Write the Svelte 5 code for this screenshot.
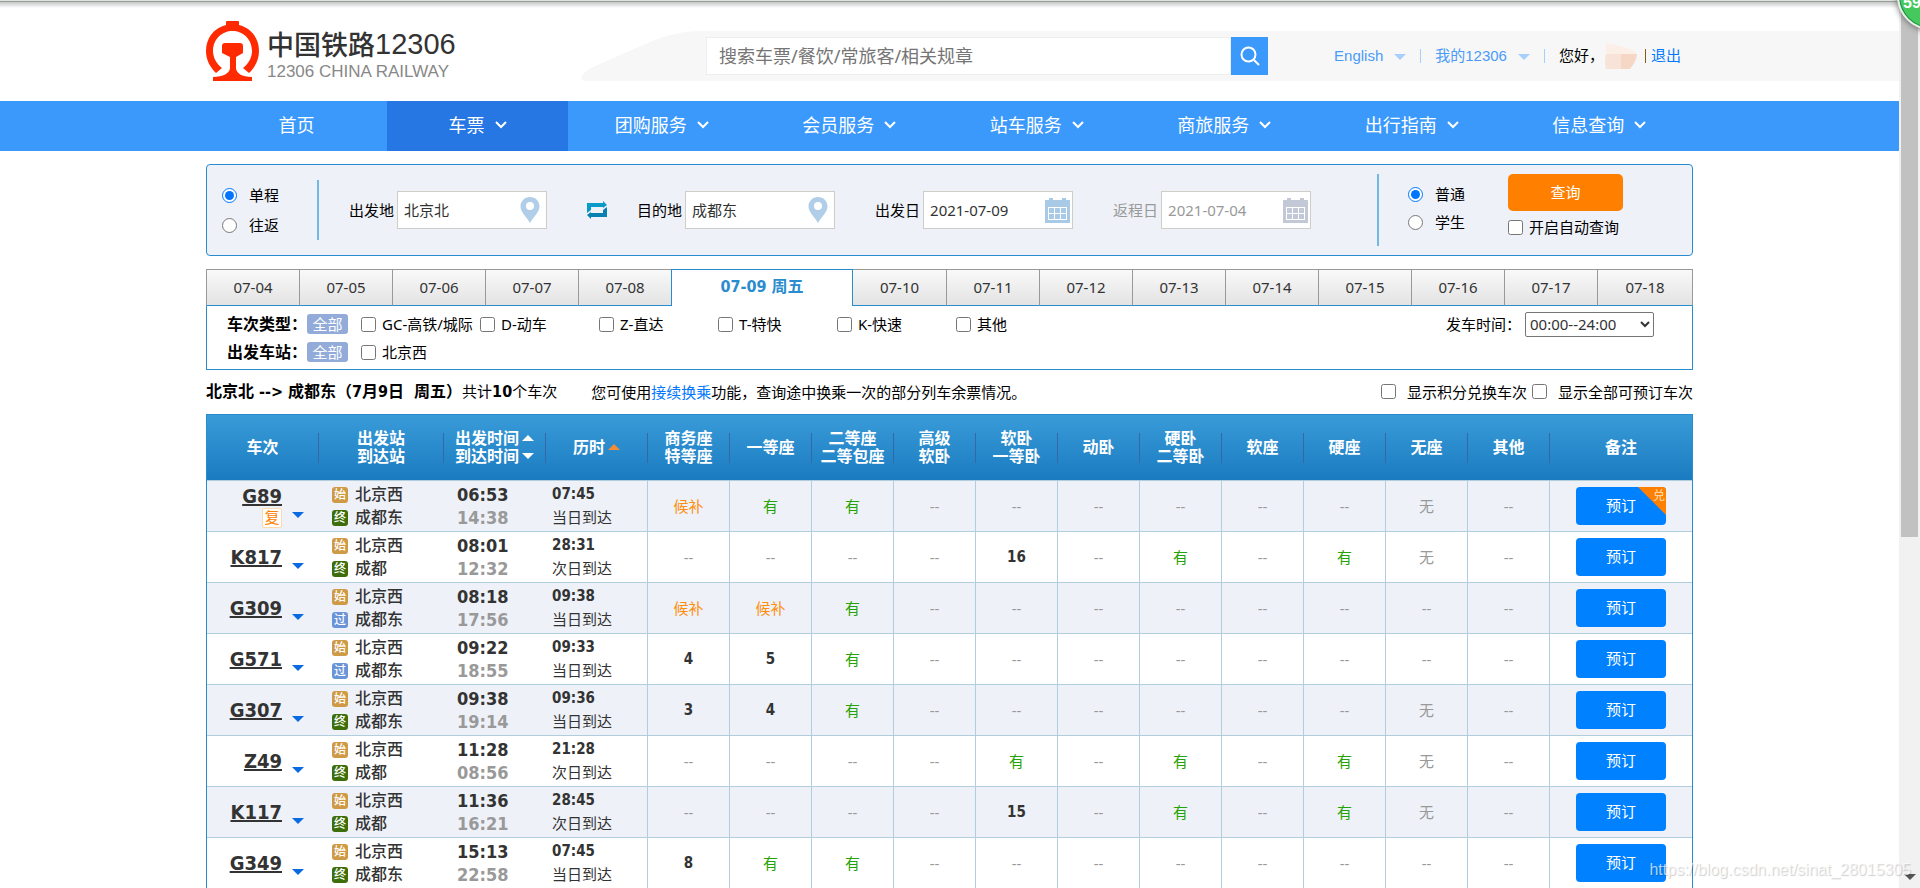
<script lang="ts">
  type Train = {
    code: string;
    fuxing?: boolean;
    to: string;
    end: string;
    dep: string;
    arr: string;
    dur: string;
    day: string;
    seats: string[];
    points?: boolean;
  };

  const nav = ["首页", "车票", "团购服务", "会员服务", "站车服务", "商旅服务", "出行指南", "信息查询"];

  const days = ["07-04", "07-05", "07-06", "07-07", "07-08", "07-09 周五", "07-10", "07-11",
    "07-12", "07-13", "07-14", "07-15", "07-16", "07-17", "07-18"];

  const types = ["GC-高铁/城际", "D-动车", "Z-直达", "T-特快", "K-快速", "其他"];

  const seatHeads = [
    ["商务座", "特等座"], ["一等座"], ["二等座", "二等包座"], ["高级", "软卧"], ["软卧", "一等卧"],
    ["动卧"], ["硬卧", "二等卧"], ["软座"], ["硬座"], ["无座"], ["其他"],
  ];

  const row = (s: string) => s.split(" ");

  const trains: Train[] = [
    { code: "G89", fuxing: true, to: "成都东", end: "终", dep: "06:53", arr: "14:38", dur: "07:45", day: "当日到达", seats: row("候补 有 有 -- -- -- -- -- -- 无 --"), points: true },
    { code: "K817", to: "成都", end: "终", dep: "08:01", arr: "12:32", dur: "28:31", day: "次日到达", seats: row("-- -- -- -- 16 -- 有 -- 有 无 --") },
    { code: "G309", to: "成都东", end: "过", dep: "08:18", arr: "17:56", dur: "09:38", day: "当日到达", seats: row("候补 候补 有 -- -- -- -- -- -- -- --") },
    { code: "G571", to: "成都东", end: "过", dep: "09:22", arr: "18:55", dur: "09:33", day: "当日到达", seats: row("4 5 有 -- -- -- -- -- -- -- --") },
    { code: "G307", to: "成都东", end: "终", dep: "09:38", arr: "19:14", dur: "09:36", day: "当日到达", seats: row("3 4 有 -- -- -- -- -- -- 无 --") },
    { code: "Z49", to: "成都", end: "终", dep: "11:28", arr: "08:56", dur: "21:28", day: "次日到达", seats: row("-- -- -- -- 有 -- 有 -- 有 无 --") },
    { code: "K117", to: "成都", end: "终", dep: "11:36", arr: "16:21", dur: "28:45", day: "次日到达", seats: row("-- -- -- -- 15 -- 有 -- 有 无 --") },
    { code: "G349", to: "成都东", end: "终", dep: "15:13", arr: "22:58", dur: "07:45", day: "当日到达", seats: row("8 有 有 -- -- -- -- -- -- -- --") },
  ];

  const seatClass = (v: string) => {
    if (v === "有") return "yes";
    if (v === "候补") return "wait";
    if (v === "--" || v === "无") return "no";
    return "num";
  };

  let trip = $state("single");
  let kind = $state("normal");
</script>

{#snippet pin()}
  <svg class="field-icon" width="20" height="26" viewBox="0 0 20 26">
    <path d="M10 0C4.500 0 0.500 4.200 0.500 9.500C0.500 15 6 19 10 26C14 19 19.500 15 19.500 9.500C19.500 4.200 15.500 0 10 0Z" fill="#b0cee8" />
    <circle cx="10" cy="9" r="4" fill="#fff" />
  </svg>
{/snippet}

{#snippet calendar(color: string)}
  <svg class="field-icon" width="25" height="25" viewBox="0 0 25 25">
    <path d="M0 2H4V0H8V2H17V0H21V2H25V25H0Z" fill={color} />
    <path d="M3 9H22V22H3Z" fill="#fff" />
    <path d="M4 10h5v5h-5zM10 10h5v5h-5zM16 10h5v5h-5zM4 16h5v5h-5zM10 16h5v5h-5zM16 16h5v5h-5z" fill={color} />
  </svg>
{/snippet}

<div class="screen">
  <div class="page">
    <header>
      <a class="logo" href="#top">
        <svg width="53" height="60" viewBox="0 0 53 60">
          <path d="M20 4V1Q20 0 21 0H32Q33 0 33 1V4C45 7 53 17 53 30C53 39 49 46 43 52L37 47C42 43 46 37 46 30C46 18 37 10 26.500 10C16 10 7 18 7 30C7 37 11 43 16 47L10 52C4 46 0 39 0 30C0 17 8 7 20 4Z" fill="#ff2a00" />
          <path d="M19 22H34Q37 22 37 25V32L30 36V47C30 52 36 56 46 56V60H7V56C17 56 24 52 24 47V36L16 32V25Q16 22 19 22Z" fill="#ff2a00" />
        </svg>
        <span class="brand">
          <strong>中国铁路<span>12306</span></strong>
          <small>12306 CHINA RAILWAY</small>
        </span>
      </a>
      <svg class="curve" width="125" height="50" viewBox="0 0 125 50">
        <path d="M6 50Q0 50 0 47Q2 41 12 36L62 14Q90 1 115 0H125V50Z" fill="#f7f7f7" />
      </svg>
      <div class="band">
        <form class="search">
          <input type="text" aria-label="搜索" placeholder="搜索车票/餐饮/常旅客/相关规章" />
          <button type="button" aria-label="搜索">
            <svg width="20" height="20" viewBox="0 0 20 20" fill="none" stroke="#fff" stroke-width="2">
              <circle cx="8.500" cy="8.500" r="7" />
              <path d="M13.500 13.500L19 19" />
            </svg>
          </button>
        </form>
        <div class="user">
          <a class="soft" href="#en">English</a><i class="tri pale"></i><i class="bar"></i>
          <a class="soft" href="#my">我的12306</a><i class="tri pale"></i><i class="bar"></i>
          <span>您好，</span>
          <svg width="34" height="26" viewBox="0 0 34 26">
            <path d="M2 1Q14 1 25 6Q32 7 33 14Q31 20 26 25H4Q0 18 2 10Z" fill="#fbefe8" />
            <path d="M2 11H17V26H2Q0 20 2 11Z" fill="#f8e3d8" />
            <path d="M17 11H33Q32 19 26 26H17Z" fill="#f6d7c5" />
          </svg>
          <i class="bar dark"></i>
          <a href="#out">退出</a>
        </div>
      </div>
    </header>

    <nav>
      <div class="wrap nav-list">
        {#each nav as item, i}
          <a href="#nav" class:short={i < 2} class:active={i === 1}>
            {item}
            {#if i > 0}
              <svg width="12" height="8" viewBox="0 0 12 8" fill="none" stroke="#fff" stroke-width="2"><path d="M1 1L6 6L11 1" /></svg>
            {/if}
          </a>
        {/each}
      </div>
    </nav>

    <main class="wrap">
      <form class="query">
        <div class="trip">
          <label><input type="radio" name="trip" value="single" bind:group={trip} />单程</label>
          <label><input type="radio" name="trip" value="round" bind:group={trip} />往返</label>
        </div>
        <div class="fields">
          <label class="field">出发地<span class="box"><input type="text" value="北京北" />{@render pin()}</span></label>
          <button class="swap" type="button" aria-label="切换">
            <svg width="20" height="18" viewBox="0 0 20 18">
              <path d="M0 12V2H16V0L20 4L16 7V6H4V9Z" fill="#0a9ac8" />
              <path d="M20 6V16H4V18L0 14L4 11V12H16V9Z" fill="#0880b0" />
            </svg>
          </button>
          <label class="field">目的地<span class="box"><input type="text" value="成都东" />{@render pin()}</span></label>
          <label class="field">出发日<span class="box date"><input type="text" value="2021-07-09" />{@render calendar("#a9cae6")}</span></label>
          <label class="field off">返程日<span class="box date"><input type="text" value="2021-07-04" />{@render calendar("#c3c8d6")}</span></label>
        </div>
        <div class="kind">
          <label><input type="radio" name="kind" value="normal" bind:group={kind} />普通</label>
          <label><input type="radio" name="kind" value="student" bind:group={kind} />学生</label>
        </div>
        <div class="actions">
          <button type="button">查询</button>
          <label><input type="checkbox" />开启自动查询</label>
        </div>
      </form>

      <div class="tabs">
        {#each days as day, i}
          <button type="button" class:on={i === 5}>{day}</button>
        {/each}
      </div>

      <section class="filters">
        <div class="filter">
          <b>车次类型：</b><button class="all" type="button">全部</button>
          {#each types as t}
            <label class="opt"><input type="checkbox" />{t}</label>
          {/each}
          <label class="depart">发车时间：
            <select><option>00:00--24:00</option></select>
          </label>
        </div>
        <div class="filter">
          <b>出发车站：</b><button class="all" type="button">全部</button>
          <label class="opt"><input type="checkbox" />北京西</label>
        </div>
      </section>

      <div class="summary">
        <p><b>北京北 --&gt; 成都东（7月9日&nbsp; 周五）</b>共计<b>10</b>个车次</p>
        <p class="tip">您可使用<a href="#transfer">接续换乘</a>功能，查询途中换乘一次的部分列车余票情况。</p>
        <label><input type="checkbox" />显示积分兑换车次</label>
        <label><input type="checkbox" />显示全部可预订车次</label>
      </div>

      <table>
        <colgroup>
          <col class="c-code" /><col class="c-station" /><col class="c-time" /><col class="c-time" />
          {#each seatHeads as _}<col class="c-seat" />{/each}
          <col />
        </colgroup>
        <thead>
          <tr>
            <th><div>车次</div></th>
            <th><div>出发站<br />到达站</div></th>
            <th><div><span>出发时间<i class="tri up"></i></span><span>到达时间<i class="tri white"></i></span></div></th>
            <th><div><span>历时<i class="tri up orange"></i></span></div></th>
            {#each seatHeads as head}
              <th><div>{#each head as line}<span>{line}</span>{/each}</div></th>
            {/each}
            <th><div>备注</div></th>
          </tr>
        </thead>
        <tbody>
          {#each trains as t}
            <tr>
              <td>
                <div class="code">
                  <span class="num-col">
                    <a href="#train">{t.code}</a>
                    {#if t.fuxing}<em>复</em>{/if}
                  </span>
                  <i class="tri blue"></i>
                </div>
              </td>
              <td>
                <div class="pair stations">
                  <span><i class="tag start">始</i>北京西</span>
                  <span><i class="tag" class:pass={t.end === "过"}>{t.end}</i>{t.to}</span>
                </div>
              </td>
              <td><div class="pair times"><span>{t.dep}</span><span class="grey">{t.arr}</span></div></td>
              <td class="line"><div class="pair durs"><b>{t.dur}</b><span>{t.day}</span></div></td>
              {#each t.seats as s}
                <td class="line seat {seatClass(s)}">{s}</td>
              {/each}
              <td class="seat">
                <button class="book" type="button">预订{#if t.points}<span class="corner"></span><span class="dui">兑</span>{/if}</button>
              </td>
            </tr>
          {/each}
        </tbody>
      </table>
    </main>
  </div>

  <div class="scrollbar"><div class="thumb"></div><i class="tri"></i></div>
  <div class="ball">59</div>
  <div class="watermark">https://blog.csdn.net/sinat_28015305</div>
</div>

<style>
  :global(body) {
    margin: 0;
    background: #fff;
  }

  .screen {
    position: relative;
    display: flex;
    height: 100vh;
    overflow: hidden;
    font: 15px/18px "Noto Sans", "Noto Sans CJK SC", sans-serif;
    color: #000;
  }

  .screen::before {
    content: "";
    position: absolute;
    inset: 0 0 auto;
    height: 8px;
    background: linear-gradient(#dfe2df 0 1px, #9b9f9b 1px 2px, #c4c6c4 2px, #fff);
  }

  .page {
    flex: 1;
    min-width: 0;
  }

  .wrap {
    max-width: 1487px;
    margin: 0 auto;
  }

  * {
    box-sizing: border-box;
  }

  a {
    color: #0077ff;
    text-decoration: none;
  }

  button, input, select {
    font: inherit;
    color: inherit;
    margin: 0;
    padding: 0;
    border: 0;
  }

  input[type="checkbox"], input[type="radio"] {
    width: 15px;
    height: 15px;
    flex: none;
  }

  label {
    display: flex;
    align-items: center;
    white-space: nowrap;
  }

  .tri {
    display: inline-block;
    flex: none;
    border: 6px solid transparent;
    border-top-color: #555;
    border-bottom: 0;
  }

  .tri.pale { border-top-color: #a8cffb; margin: 2px 14px 0 11px; }
  .tri.white { border-top-color: #fff; }
  .tri.blue { border-top-color: #0a6be0; }
  .tri.up { border-top: 0; border-bottom: 6px solid #fff; }
  .tri.orange { border-bottom-color: #f28c38; }

  header {
    display: flex;
    height: 101px;
    padding-left: calc((100% - 1487px) / 2);
  }

  .logo {
    display: flex;
    width: 375px;
    flex: none;
    padding-top: 21px;
    gap: 8px;
  }

  .brand {
    display: flex;
    flex-direction: column;
    padding-top: 8px;
  }

  .brand strong {
    display: flex;
    align-items: center;
    font: 500 27px/30px "Noto Sans CJK SC", sans-serif;
    color: #333;
  }

  .brand strong span {
    font: 29px/30px "Liberation Sans", sans-serif;
  }

  .brand small {
    font: 17px/26px "Liberation Sans", sans-serif;
    color: #888;
  }

  .curve {
    margin-top: 31px;
    flex: none;
  }

  .band {
    flex: 1;
    display: flex;
    align-items: center;
    height: 50px;
    margin-top: 31px;
    padding-right: 218px;
    background: #f7f7f7;
  }

  .search {
    display: flex;
    width: 562px;
    height: 38px;
  }

  .search input {
    flex: 1;
    min-width: 0;
    padding-left: 12px;
    border: 1px solid #eee;
    background: #fff;
    font-size: 18px;
  }

  .search input::placeholder {
    color: #757575;
  }

  .search button {
    display: flex;
    align-items: center;
    justify-content: center;
    width: 37px;
    background: #3b99fc;
  }

  .user {
    display: flex;
    align-items: center;
    margin-left: auto;
    white-space: nowrap;
    font-family: "Liberation Sans", "Noto Sans CJK SC", sans-serif;
  }

  .soft {
    color: #4a9bf8;
  }

  .bar {
    width: 1px;
    height: 14px;
    margin-right: 14px;
    background: #a8cffb;
  }

  .bar.dark {
    margin: 0 5px 0 7px;
    background: #8a5a10;
  }

  nav {
    background: #3b99fc;
  }

  .nav-list {
    display: flex;
  }

  .nav-list a {
    flex: 1;
    display: flex;
    align-items: center;
    justify-content: center;
    gap: 10px;
    height: 50px;
    padding-bottom: 2px;
    font-size: 18px;
    color: #fff;
  }

  .nav-list a.short {
    flex: 0 0 181px;
  }

  .nav-list a.active {
    background: #2676e3;
  }

  .query {
    display: flex;
    align-items: center;
    height: 92px;
    margin-top: 13px;
    border: 1px solid #298cce;
    border-radius: 4px;
    background: #eef1f8;
  }

  .trip, .kind {
    display: flex;
    flex-direction: column;
    line-height: 16px;
  }

  .trip {
    width: 112px;
    height: 60px;
    justify-content: center;
    gap: 14px;
    padding-left: 15px;
    border-right: 2px solid #74b8e0;
  }

  .trip label, .kind label {
    gap: 12px;
  }

  .kind {
    width: 131px;
    height: 72px;
    padding: 12px 0 0 29px;
    gap: 12px;
    border-left: 2px solid #74b8e0;
  }

  .fields {
    flex: 1;
    display: flex;
    align-items: center;
    padding-left: 30px;
  }

  .field {
    gap: 3px;
    margin-right: 40px;
  }

  .box {
    display: flex;
    align-items: center;
    width: 150px;
    height: 38px;
    padding: 0 6px;
    border: 1px solid #cfcdc7;
    background: #fff;
    color: #333;
  }

  .box.date {
    padding-right: 2px;
  }

  .box input {
    flex: 1;
    min-width: 0;
    background: none;
  }

  .off, .off .box {
    color: #999;
  }

  .field-icon {
    flex: none;
  }

  .swap {
    display: flex;
    margin-right: 30px;
    background: none;
  }

  .actions {
    width: 184px;
    height: 72px;
  }

  .actions button {
    width: 115px;
    height: 37px;
    padding-bottom: 2px;
    border-radius: 5px;
    background: #ff8000;
    color: #fff;
  }

  .actions label {
    gap: 6px;
    margin-top: 7px;
  }

  .tabs {
    display: flex;
    margin-top: 13px;
    height: 37px;
  }

  .tabs button {
    flex: 0 1 93px;
    padding-bottom: 2px;
    border: 1px solid #999;
    border-right: 0;
    border-bottom-color: #298cce;
    background: linear-gradient(#f9f9f9, #e3e3e3);
    color: #333;
  }

  .tabs button:last-child {
    flex: 1 1 93px;
    border-right: 1px solid #999;
  }

  .tabs button.on {
    flex: 0 1 182px;
    border: 1px solid #298cce;
    border-bottom: 0;
    background: #fff;
    color: #298cce;
    font-family: "DejaVu Sans Condensed", "Noto Sans CJK SC", sans-serif;
    font-size: 16px;
    font-weight: bold;
  }

  .tabs button.on + button {
    border-left: 0;
  }

  .filters {
    display: flex;
    flex-direction: column;
    height: 64px;
    padding: 4px 38px 0 20px;
    border: 1px solid #298cce;
    border-top: 0;
  }

  .filter {
    display: flex;
    align-items: center;
    height: 28px;
  }

  .filter b {
    width: 80px;
    font-size: 16px;
    white-space: nowrap;
  }

  .all {
    width: 41px;
    height: 20px;
    margin-right: 13px;
    border-radius: 3px;
    background: #92abd9;
    color: #fff;
    line-height: 20px;
  }

  .opt {
    width: 119px;
    gap: 6px;
  }

  .depart {
    margin-left: auto;
    gap: 4px;
  }

  select {
    width: 129px;
    height: 25px;
    border: 1px solid #767676;
    border-radius: 2px;
    background: #fff;
    color: #333;
  }

  .summary {
    display: flex;
    align-items: center;
    height: 44px;
    padding-bottom: 1px;
  }

  .summary p {
    margin: 0;
    white-space: nowrap;
  }

  .summary b {
    font-family: "DejaVu Sans Condensed", "Noto Sans CJK SC", sans-serif;
    font-size: 16px;
  }

  .summary .tip {
    margin: 0 auto 0 34px;
  }

  .summary label {
    gap: 11px;
    margin-left: 5px;
  }

  table {
    width: 100%;
    table-layout: fixed;
    border-collapse: separate;
    border-spacing: 0;
    border: 1px solid #298cce;
    color: #333;
  }

  .c-code { width: 112px; }
  .c-station { width: 125px; }
  .c-time { width: 102px; }
  .c-seat { width: 82px; }

  th, td {
    padding: 0;
  }

  thead {
    background: linear-gradient(#3a9bd9, #1a7bc0);
    color: #fff;
  }

  th {
    height: 65px;
    font-size: 16px;
    line-height: 18px;
  }

  th div {
    display: flex;
    flex-direction: column;
    justify-content: center;
    height: 30px;
    padding-bottom: 2px;
    border-right: 1px solid #3668a8;
    white-space: nowrap;
  }

  th:last-child div {
    border: 0;
  }

  th .tri {
    margin: 0 0 3px 3px;
  }

  td {
    height: 51px;
    border-top: 1px solid #b0cedd;
  }

  tbody tr:nth-child(odd) {
    background: #eef1f8;
  }

  .line {
    border-right: 1px solid #b0cedd;
  }

  .code {
    display: flex;
    align-items: center;
    gap: 10px;
    height: 50px;
  }

  .num-col {
    display: flex;
    flex-direction: column;
    align-items: flex-end;
    width: 75px;
    padding-bottom: 1px;
  }

  .code a {
    color: #333;
    font: bold 20px/24px "DejaVu Sans Condensed", "Noto Sans", sans-serif;
    text-decoration: underline;
  }

  .code .tri {
    margin-top: 18px;
  }

  .code em {
    width: 20px;
    height: 20px;
    border: 1px solid #ffd9a8;
    border-radius: 2px;
    background: #fff;
    color: #ff8000;
    font-style: normal;
    line-height: 17px;
    text-align: center;
  }

  .pair {
    display: flex;
    flex-direction: column;
    line-height: 23px;
  }

  .stations {
    padding-left: 13px;
    font-size: 16px;
    font-weight: 500;
  }

  .stations span {
    display: flex;
    align-items: center;
    gap: 7px;
  }

  .tag {
    width: 16px;
    height: 16px;
    border-radius: 3px;
    background: #3d6e0a;
    color: #fff;
    font-size: 12px;
    line-height: 15px;
    font-style: normal;
    text-align: center;
  }

  .tag.start { background: #cf9a45; }
  .tag.pass { background: #6a94d8; }

  .times {
    padding-left: 13px;
    font-family: "DejaVu Sans Condensed", "Noto Sans", sans-serif;
    font-size: 18px;
    font-weight: bold;
  }

  .grey {
    color: #999;
  }

  .durs {
    padding-left: 6px;
  }

  .durs b, .num {
    font-family: "DejaVu Sans Condensed", "Noto Sans", sans-serif;
    font-weight: bold;
  }

  .seat {
    text-align: center;
  }

  .yes { color: #26a306; }
  .wait { color: #fe8f0e; }
  .no { color: #999; }

  .book {
    position: relative;
    display: block;
    width: 90px;
    height: 38px;
    margin: 0 auto;
    padding-bottom: 3px;
    overflow: hidden;
    border-radius: 4px;
    background: #0081ff;
    color: #fff;
  }

  .corner {
    position: absolute;
    top: 0;
    right: 0;
    border: 14px solid #ff8000;
    border-left-color: transparent;
    border-bottom-color: transparent;
  }

  .dui {
    position: absolute;
    top: 1px;
    right: 1px;
    font-size: 12px;
    line-height: 16px;
    color: #ffe0bd;
  }

  .scrollbar {
    position: relative;
    width: 21px;
    flex: none;
    display: flex;
    flex-direction: column;
    align-items: center;
    justify-content: space-between;
    padding-bottom: 8px;
    background: #f1f1f1;
  }

  .thumb {
    width: 17px;
    height: 537px;
    background: #c1c1c1;
  }

  .ball {
    position: absolute;
    top: -38px;
    right: -45px;
    width: 68px;
    height: 68px;
    padding: 29px 0 0 4px;
    border: 2px solid #e8efe9;
    border-radius: 50%;
    background: #45c95d;
    box-shadow: 0 1px 6px #666, inset 0 0 0 1px #1d8a45;
    color: #fff;
    font: bold 16px/20px "Liberation Sans", sans-serif;
  }

  .watermark {
    position: absolute;
    right: 9px;
    bottom: 8px;
    font: 16px/20px "Liberation Sans", sans-serif;
    color: rgba(255, 255, 255, 0.7);
    text-shadow: 1px 1px 1px rgba(0, 0, 0, 0.2);
  }
</style>
